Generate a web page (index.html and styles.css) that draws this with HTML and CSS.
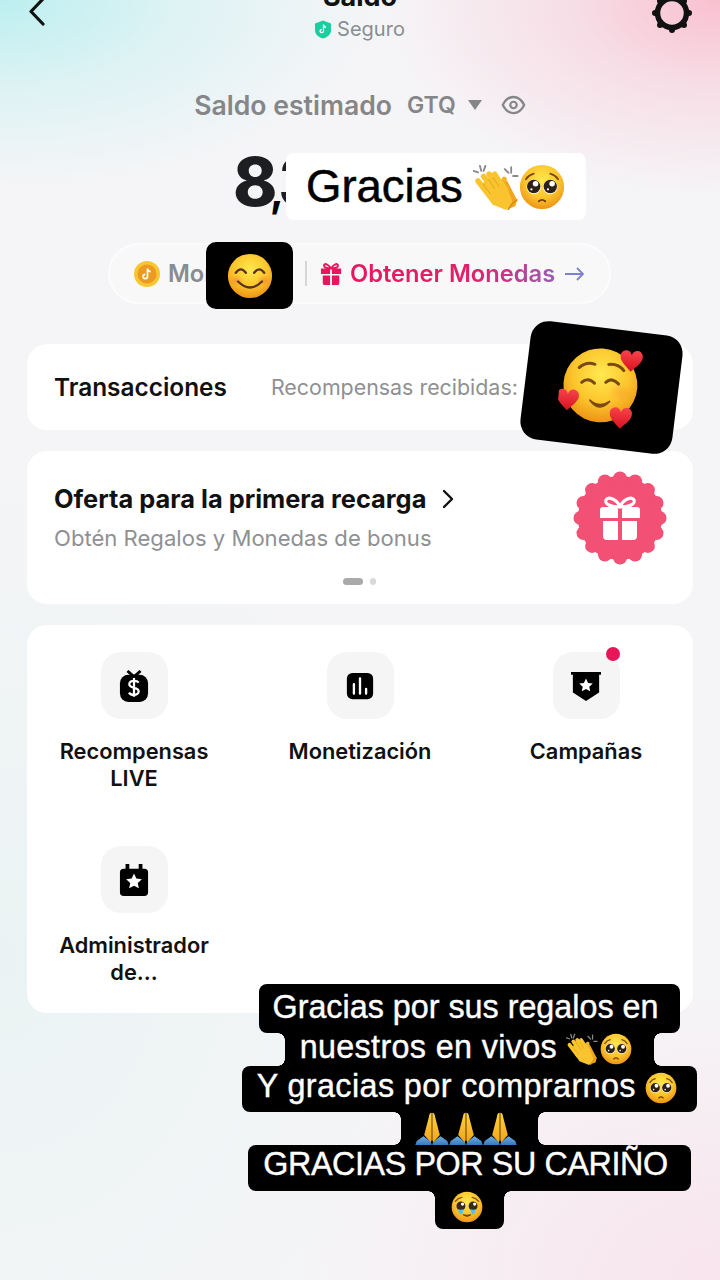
FILE: index.html
```html
<!DOCTYPE html>
<html lang="es">
<head>
<meta charset="utf-8">
<title>Saldo</title>
<link rel="stylesheet" href="styles.css">
</head>
<body>
<svg class="sprite" aria-hidden="true">
  <defs>
    <radialGradient id="face" cx="50%" cy="35%" r="70%">
      <stop offset="0" stop-color="#ffe94f"/>
      <stop offset=".55" stop-color="#fcc52c"/>
      <stop offset="1" stop-color="#ea8a12"/>
    </radialGradient>
    <radialGradient id="blush" cx="50%" cy="50%" r="50%">
      <stop offset="0" stop-color="#f4683a" stop-opacity=".45"/>
      <stop offset="1" stop-color="#f4683a" stop-opacity="0"/>
    </radialGradient>
    <linearGradient id="heart" x1="0" y1="0" x2="0" y2="1">
      <stop offset="0" stop-color="#f9424c"/>
      <stop offset="1" stop-color="#d5121f"/>
    </linearGradient>
    <linearGradient id="hand" x1="0" y1="0" x2="0" y2="1">
      <stop offset="0" stop-color="#ffd23f"/>
      <stop offset="1" stop-color="#f2a51c"/>
    </linearGradient>
    <linearGradient id="sleeve" x1="0" y1="0" x2="0" y2="1">
      <stop offset="0" stop-color="#6fb0e8"/>
      <stop offset="1" stop-color="#2f72b5"/>
    </linearGradient>
    <symbol id="e-plead" viewBox="0 0 100 100">
      <circle cx="50" cy="50" r="48" fill="url(#face)"/>
      <path d="M15 33q6-9 17-12M85 33q-6-9-17-12" fill="none" stroke="#7a4a12" stroke-width="4" stroke-linecap="round"/>
      <circle cx="32" cy="50" r="15.500" fill="#fff"/><circle cx="68" cy="50" r="15.500" fill="#fff"/>
      <circle cx="32" cy="49" r="14.500" fill="#2c2018"/><circle cx="68" cy="49" r="14.500" fill="#2c2018"/>
      <circle cx="36" cy="43" r="6" fill="#fff"/><circle cx="72" cy="43" r="6" fill="#fff"/>
      <circle cx="27" cy="55" r="2.500" fill="#fff"/><circle cx="63" cy="55" r="2.500" fill="#fff"/>
      <path d="M43 81q7-6 14 0" fill="none" stroke="#6d3c10" stroke-width="4" stroke-linecap="round"/>
    </symbol>
    <symbol id="e-tear" viewBox="0 0 100 100">
      <circle cx="50" cy="50" r="48" fill="url(#face)"/>
      <path d="M14 32q8-10 20-12M86 32q-8-10-20-12" fill="none" stroke="#8a5514" stroke-width="4" stroke-linecap="round"/>
      <circle cx="31" cy="47" r="14" fill="#3a2a1e"/><circle cx="69" cy="47" r="14" fill="#3a2a1e"/>
      <circle cx="36" cy="41" r="5" fill="#fff"/><circle cx="74" cy="41" r="5" fill="#fff"/>
      <path d="M22 56q9 5 18 0l-4 14q-5 6-10 0zM60 56q9 5 18 0l-4 14q-5 6-10 0z" fill="#52c3e8"/>
      <path d="M38 74q12 10 24 0q-12 4-24 0z" fill="#6d3c10" stroke="#6d3c10" stroke-width="3" stroke-linejoin="round"/>
    </symbol>
    <symbol id="e-smile" viewBox="0 0 100 100">
      <circle cx="50" cy="50" r="48" fill="url(#face)"/>
      <ellipse cx="20" cy="60" rx="16" ry="12" fill="url(#blush)"/><ellipse cx="80" cy="60" rx="16" ry="12" fill="url(#blush)"/>
      <path d="M19 43q11-15 22 0M59 43q11-15 22 0" fill="none" stroke="#59341a" stroke-width="5" stroke-linecap="round"/>
      <path d="M24 62q26 26 52 0" fill="none" stroke="#59341a" stroke-width="5" stroke-linecap="round"/>
    </symbol>
    <symbol id="e-hearts" viewBox="0 0 100 100">
      <circle cx="48" cy="47" r="43" fill="url(#face)"/>
      <ellipse cx="72" cy="54" rx="14" ry="11" fill="url(#blush)" opacity=".5"/>
      <path d="M22 28q8-8 18-5M56 22q11-2 18 6" fill="none" stroke="#7b4a12" stroke-width="3.500" stroke-linecap="round"/>
      <path d="M26 45q7-7 15 0M54 43q7-7 15 1" fill="none" stroke="#7b4a12" stroke-width="3.500" stroke-linecap="round"/>
      <path d="M37 65q12 9 23 0q-11 14-23 0z" fill="#7b4a12" stroke="#7b4a12" stroke-width="2" stroke-linejoin="round"/>
      <use href="#e-heart" x="68" y="3" width="28" height="28"/>
      <use href="#e-heart" x="-3" y="53" width="28" height="28"/>
      <use href="#e-heart" x="60" y="70" width="28" height="28"/>
    </symbol>
    <symbol id="e-heart" viewBox="0 0 24 24">
      <path d="M12 22C6 16 1 12 1 7.500A5.500 5.500 0 0 1 12 5.500 5.500 5.500 0 0 1 23 7.500C23 12 18 16 12 22z" fill="url(#heart)"/>
    </symbol>
    <symbol id="e-clap" viewBox="0 0 100 100">
      <path d="M1 15l10 3M15 4l3 11M27 4l-4 11M69 11l8 8M83 7v12M97 26H87" fill="none" stroke="#8a8a8a" stroke-width="4" stroke-linecap="round"/>
      <path d="M68 33L62 58" fill="none" stroke="#f4b426" stroke-width="11" stroke-linecap="round"/>
      <path d="M60 50l14-14 22 42-4 14-16 6z" fill="#f0a71f"/>
      <path d="M14 45l38-24 22 28 12 34-14 17-30-12z" fill="#f9c42f"/>
      <g fill="none" stroke="#f9c42f" stroke-width="12" stroke-linecap="round">
        <path d="M11 37l26 34M23 27l24 32M35 22l21 30M47 22l18 30"/>
      </g>
      <path d="M22 44l16 21M33 33l14 20M44 30l12 18" fill="none" stroke="#e39c18" stroke-width="1.800" stroke-linecap="round"/>
      <path d="M76 100l10-15 10-7" fill="none" stroke="#d98c10" stroke-width="3" stroke-linecap="round"/>
    </symbol>
    <symbol id="e-pray" viewBox="0 0 100 100">
      <path d="M0 100l5-15 20-14 22 17 3 12zM100 100l-5-15-20-14-22 17-3 12z" fill="url(#sleeve)"/>
      <path d="M49 2c-5 0-7 4-8 12L27 68l19 21 3-6z" fill="url(#hand)"/>
      <path d="M51 2c5 0 7 4 8 12l14 54-19 21-3-6z" fill="url(#hand)"/>
      <path d="M50 4v78" stroke="#c9780f" stroke-width="1.500"/>
    </symbol>
  </defs>
</svg>

<header class="header">
  <svg class="back" viewBox="0 0 20 30"><path d="M16 2L4 14.500 16 27" fill="none" stroke="#111" stroke-width="3.200" stroke-linecap="round" stroke-linejoin="round"/></svg>
  <div class="title-box">
    <h1 class="title">Saldo</h1>
    <div class="secure">
      <svg class="shield" viewBox="0 0 16 18"><path d="M8 0l8 3v7c0 4-4 7-8 8-4-1-8-4-8-8V3z" fill="#19cfa0"/><path d="M8.500 4v6.500a1.700 1.700 0 1 1-1.700-1.700M8.500 4.500q.6 2 2.600 2.300" fill="none" stroke="#fff" stroke-width="1.300"/></svg>
      <span>Seguro</span>
    </div>
  </div>
  <svg class="gear" viewBox="0 0 40 40">
    <circle cx="20" cy="20" r="14.500" fill="none" stroke="#111" stroke-width="5.500"/>
    <g fill="#111"><circle cx="20" cy="3" r="3"/><circle cx="20" cy="37" r="3"/><circle cx="3" cy="20" r="3"/><circle cx="37" cy="20" r="3"/><circle cx="8" cy="8" r="3"/><circle cx="32" cy="8" r="3"/><circle cx="8" cy="32" r="3"/><circle cx="32" cy="32" r="3"/></g>
  </svg>
</header>

<section class="estimate">
  <span class="estimate-label">Saldo estimado</span>
  <span class="currency">GTQ</span>
  <svg class="caret" viewBox="0 0 14 10"><path d="M0 0h14L7 10z" fill="#858688"/></svg>
  <svg class="eye" viewBox="0 0 28 22"><path d="M2 11C5 5 9 2 14 2s9 3 12 9c-3 6-7 9-12 9S5 17 2 11z" fill="none" stroke="#858688" stroke-width="2.600" stroke-linejoin="round"/><circle cx="14" cy="11" r="3.600" fill="none" stroke="#858688" stroke-width="2.400"/></svg>
</section>

<div class="balance"><span class="balance-num">8<span class="balance-comma">,</span>3</span></div>

<section class="pill">
  <svg class="coin" viewBox="0 0 26 26"><circle cx="13" cy="13" r="13" fill="#f8c631"/><circle cx="13" cy="13" r="9.500" fill="#ec9a22"/><path d="M13.500 7.500v8a2.200 2.200 0 1 1-2.200-2.200M13.500 8q.8 2.400 3.200 2.700" fill="none" stroke="#fff" stroke-width="1.700"/></svg>
  <span class="pill-coins">Monedas</span>
  <span class="pill-div"></span>
  <svg class="pill-gift" viewBox="0 0 24 24"><path d="M1 6h22v6H1zM3 13.500h8V24H5a2 2 0 0 1-2-2zM13 13.500h8V22a2 2 0 0 1-2 2h-6zM11 6v6h2V6z" fill="#e8175d"/><path d="M12 6C9 1 5 0 4.500 2.500S8 6 12 6zM12 6c3-5 7-6 7.500-3.500S16 6 12 6z" fill="none" stroke="#e8175d" stroke-width="2.200"/></svg>
  <span class="pill-cta">Obtener Monedas</span>
  <svg class="pill-arrow" viewBox="0 0 19 14"><path d="M0 7h17.500M12 1l6 6-6 6" fill="none" stroke="#7d7fd0" stroke-width="1.800"/></svg>
</section>

<section class="card card-tx">
  <span class="tx-title">Transacciones</span>
  <span class="tx-sub">Recompensas recibidas:</span>
</section>

<section class="card card-offer">
  <div class="offer-text">
    <div class="offer-title">Oferta para la primera recarga
      <svg class="offer-chevron" viewBox="0 0 12 20"><path d="M2 2l8 8-8 8" fill="none" stroke="#111" stroke-width="2.400" stroke-linecap="round" stroke-linejoin="round"/></svg>
    </div>
    <div class="offer-sub">Obtén Regalos y Monedas de bonus</div>
    <div class="dots"><span class="dot-on"></span><span class="dot-off"></span></div>
  </div>
  <svg class="badge" viewBox="0 0 94 94">
    <g fill="#f25074">
      <circle cx="47" cy="47" r="42"/>
      <circle cx="47" cy="7.500" r="7"/><circle cx="62.100" cy="10.500" r="7"/><circle cx="74.900" cy="19.100" r="7"/><circle cx="83.500" cy="31.900" r="7"/>
      <circle cx="86.500" cy="47" r="7"/><circle cx="83.500" cy="62.100" r="7"/><circle cx="74.900" cy="74.900" r="7"/><circle cx="62.100" cy="83.500" r="7"/>
      <circle cx="47" cy="86.500" r="7"/><circle cx="31.900" cy="83.500" r="7"/><circle cx="19.100" cy="74.900" r="7"/><circle cx="10.500" cy="62.100" r="7"/>
      <circle cx="7.500" cy="47" r="7"/><circle cx="10.500" cy="31.900" r="7"/><circle cx="19.100" cy="19.100" r="7"/><circle cx="31.900" cy="10.500" r="7"/>
    </g>
    <path d="M27 39a3 3 0 0 1 3-3h13l2 2v9H27zM49 38l2-2h13a3 3 0 0 1 3 3v8H49zM30 50h15v19H34a4 4 0 0 1-4-4zM49 50h15v15a4 4 0 0 1-4 4H49z" fill="#fff"/>
    <path d="M47 36c-3-8-12-11-14-7s5 7 14 7zM47 36c3-8 12-11 14-7s-5 7-14 7z" fill="none" stroke="#fff" stroke-width="3.200"/>
  </svg>
</section>

<section class="card card-grid">
  <div class="tool">
    <div class="tile">
      <svg class="tile-icon" viewBox="0 0 32 34"><path d="M9 1l7 6 7-6" fill="none" stroke="#000" stroke-width="3"/><rect x="1" y="5" width="30" height="29" rx="9" fill="#000"/><path d="M21 13.500c-1-1.500-3-2-5-2-3 0-5 1.300-5 3.700 0 5 10 2.500 10 7.500 0 2.300-2.200 3.800-5 3.800-2.400 0-4.300-.8-5.400-2.500M16 8.500v20" fill="none" stroke="#fff" stroke-width="2.400"/></svg>
    </div>
    <div class="tool-label">Recompensas LIVE</div>
  </div>
  <div class="tool">
    <div class="tile">
      <svg class="tile-icon" viewBox="0 0 32 34"><rect x="2" y="3" width="28" height="28" rx="6" fill="#000"/><path d="M9.500 15v10M16 9v16M22.500 20v5" stroke="#fff" stroke-width="2.500" stroke-linecap="round"/></svg>
    </div>
    <div class="tool-label">Monetización</div>
  </div>
  <div class="tool">
    <div class="tile">
      <svg class="tile-icon" viewBox="0 0 32 34"><path d="M0 2h32v3h-2v19L16 33 2 24V5H0z" fill="#000"/><path d="M16 9l2.200 4.700 5 .6-3.700 3.400 1 5L16 20.200l-4.500 2.500 1-5-3.700-3.400 5-.6z" fill="#fff"/></svg>
      <span class="notif"></span>
    </div>
    <div class="tool-label">Campañas</div>
  </div>
  <div class="tool">
    <div class="tile">
      <svg class="tile-icon" viewBox="0 0 32 34"><path d="M7 0h4v5h10V0h4v5h2a4 4 0 0 1 4 4v21a4 4 0 0 1-4 4H5a4 4 0 0 1-4-4V9a4 4 0 0 1 4-4h2z" fill="#000"/><path d="M16 10l2.500 5.400 5.900.7-4.400 4 1.200 5.800-5.200-2.900-5.200 2.900 1.200-5.800-4.400-4 5.900-.7z" fill="#fff"/></svg>
    </div>
    <div class="tool-label">Administrador de...</div>
  </div>
</section>

<div class="sticker sticker-thanks">
  <span>Gracias</span>
  <span class="thanks-emoji">
    <svg class="em em-46"><use href="#e-clap"/></svg><svg class="em em-46"><use href="#e-plead"/></svg>
  </span>
</div>
<div class="sticker sticker-smile"><svg class="em em-46 em-tall"><use href="#e-smile"/></svg></div>
<div class="sticker sticker-hearts"><svg class="em em-86"><use href="#e-hearts"/></svg></div>

<div class="caption">
  <div class="cap cap-1">Gracias por sus regalos en</div>
  <div class="cap cap-narrow cap-2">nuestros en vivos <svg class="em em-32"><use href="#e-clap"/></svg><svg class="em em-32"><use href="#e-plead"/></svg></div>
  <div class="cap cap-3">Y gracias por comprarnos <svg class="em em-32"><use href="#e-plead"/></svg></div>
  <div class="cap cap-narrow cap-4"><svg class="em em-34"><use href="#e-pray"/></svg><svg class="em em-34"><use href="#e-pray"/></svg><svg class="em em-34"><use href="#e-pray"/></svg></div>
  <div class="cap cap-5">GRACIAS POR SU CARIÑO</div>
  <div class="cap cap-narrow cap-6"><svg class="em em-32"><use href="#e-tear"/></svg></div>
</div>
</body>
</html>
```
FILE: styles.css
```css
* { box-sizing: border-box; margin: 0; padding: 0; }

html, body { width: 720px; height: 1280px; overflow: hidden; }

body {
  position: relative;
  font-family: Inter, "Noto Sans", sans-serif;
  color: #111;
  background:
    radial-gradient(ellipse 380px 190px at 0 0, #bdeff0 0, rgba(189,239,240,.38) 50%, rgba(189,239,240,0) 100%),
    radial-gradient(ellipse 340px 200px at 100% 0, #f9c0d0 0, rgba(249,192,208,.42) 45%, rgba(249,192,208,0) 100%),
    radial-gradient(ellipse 420px 300px at 100% 100%, #f8e4ec 0, rgba(248,228,236,0) 100%),
    radial-gradient(ellipse 420px 500px at 0 75%, #eaf3f3 0, rgba(234,243,243,0) 100%),
    #f5f5f7;
}

.sprite { position: absolute; width: 0; height: 0; }

.header {
  display: grid;
  grid-template-columns: 1fr auto 1fr;
  align-items: start;
  margin-top: -22px;
  padding: 0 27px;
  height: 66px;
}
.back { width: 20px; height: 30px; margin-top: 19px; }
.title-box { display: flex; flex-direction: column; align-items: center; }
.title { font-size: 27px; font-weight: 700; line-height: 38px; }
.secure { display: flex; align-items: center; gap: 6px; font-size: 20px; color: #8b8d90; line-height: 26px; }
.shield { width: 16px; height: 19px; }
.gear { width: 40px; height: 40px; margin-top: 15px; justify-self: end; margin-right: 1px; }

.estimate {
  display: flex;
  align-items: center;
  justify-content: center;
  margin-top: 43px;
  height: 36px;
  color: #858688;
  font-weight: 600;
}
.estimate-label { font-size: 26.600px; }
.currency { font-size: 23px; margin-left: 15px; }
.caret { width: 16px; height: 10px; margin-left: 11px; }
.eye { width: 25px; height: 20px; margin-left: 18px; }

.balance {
  display: flex;
  justify-content: center;
  margin-top: 26px;
  height: 66px;
  font-size: 67px;
  line-height: 66px;
  font-weight: 800;
  color: #1d1e21;
}
.balance-num { width: 256px; padding-left: 1px; letter-spacing: -1px; }
.balance-comma { font-size: 46px; font-weight: 600; color: #000; margin: 0 -6px 0 -7px; letter-spacing: 0; }

.pill {
  display: flex;
  align-items: center;
  width: 503px;
  height: 61px;
  margin: 28px 0 0 108px;
  padding: 0 24px;
  border: 2px solid rgba(255,255,255,.5);
  border-radius: 31px;
  background: rgba(255,255,255,.3);
}
.coin { width: 26px; height: 26px; flex: none; }
.pill-coins { font-size: 23.700px; font-weight: 600; color: #8a8b8e; margin-left: 8px; width: 137px; flex: none; overflow: hidden; }
.pill-div { width: 2px; height: 25px; background: #d5d6d8; flex: none; }
.pill-gift { width: 22px; height: 22px; margin-left: 13px; flex: none; }
.pill-cta {
  margin-left: 8px;
  font-size: 23.700px;
  font-weight: 600;
  background: linear-gradient(90deg, #e8175d 0, #e2206a 60%, #9a5bb5 100%);
  -webkit-background-clip: text;
  background-clip: text;
  color: transparent;
  white-space: nowrap;
}
.pill-arrow { width: 19px; height: 14px; margin-left: 10px; flex: none; }

.card {
  margin: 0 27px;
  background: #fff;
  border-radius: 20px;
}

.card-tx {
  display: flex;
  align-items: center;
  height: 86px;
  margin-top: 40px;
  padding-left: 27px;
}
.tx-title { font-size: 24.400px; font-weight: 600; color: #111; }
.tx-sub { margin-left: 44px; font-size: 21.400px; color: #8f9093; white-space: nowrap; }

.card-offer {
  display: flex;
  justify-content: space-between;
  height: 153px;
  margin-top: 21px;
  padding: 0 26px 0 27px;
}
.offer-title { display: flex; align-items: center; margin-top: 32px; font-size: 25.400px; line-height: 32px; font-weight: 700; }
.offer-chevron { width: 12px; height: 20px; margin-left: 16px; }
.offer-sub { margin-top: 8px; font-size: 22.100px; line-height: 30px; color: #8f9093; }
.offer-text { flex: 1; }
.dots { display: flex; align-items: center; gap: 7px; margin: 25px 0 0 289px; }
.dot-on { width: 20px; height: 7px; border-radius: 4px; background: #a9aaac; }
.dot-off { width: 6px; height: 7px; border-radius: 3px; background: #d8d9db; }
.badge { width: 94px; height: 94px; margin-top: 20px; flex: none; }

.card-grid {
  display: grid;
  grid-template-columns: repeat(3, 1fr);
  grid-auto-rows: 194px;
  column-gap: 66px;
  height: 388px;
  margin-top: 21px;
  padding: 27px 27px 0;
}
.tool { display: flex; flex-direction: column; align-items: center; }
.tile {
  position: relative;
  display: flex;
  align-items: center;
  justify-content: center;
  width: 67px;
  height: 67px;
  border-radius: 20px;
  background: #f5f5f5;
}
.tile-icon { width: 30px; height: 32px; }
.notif {
  position: absolute;
  top: -5px;
  right: 0;
  width: 14px;
  height: 14px;
  border-radius: 50%;
  background: #ea1559;
}
.tool-label {
  margin-top: 19px;
  width: 160px;
  text-align: center;
  font-size: 21.800px;
  line-height: 27px;
  font-weight: 600;
  color: #111;
}

.em { display: inline-block; vertical-align: middle; flex: none; }
.em-32 { width: 32px; height: 32px; }
.em-34 { width: 34px; height: 34px; }
.em-46 { width: 46px; height: 46px; }
.em-86 { width: 86px; height: 86px; }
.em-tall { height: 48px; }

.sticker { position: absolute; display: flex; align-items: center; justify-content: center; }
.sticker-thanks {
  left: 286px;
  top: 153px;
  width: 300px;
  height: 67px;
  border-radius: 8px;
  background: #fff;
  color: #000;
  font-family: "Liberation Sans", Arial, sans-serif;
  font-size: 45.500px;
  -webkit-text-stroke: .5px #000;
  gap: 10px;
  justify-content: flex-start;
  padding-left: 20px;
}
.thanks-emoji { display: flex; }
.sticker-smile {
  left: 206px;
  top: 242px;
  width: 87px;
  height: 67px;
  border-radius: 10px;
  background: #000;
}
.sticker-hearts {
  left: 525px;
  top: 328px;
  width: 153px;
  height: 119px;
  border-radius: 18px;
  background: #000;
  transform: rotate(7deg);
}
.sticker-hearts .em { transform: rotate(-3deg); }

.caption {
  position: absolute;
  left: 229.500px;
  top: 984px;
  width: 480px;
  display: flex;
  flex-direction: column;
  align-items: center;
  color: #fff;
  font-family: "Liberation Sans", Arial, sans-serif;
  font-size: 32.300px;
  -webkit-text-stroke: .4px #fff;
  white-space: nowrap;
}
.cap { position: relative; background: #000; border-radius: 8px; padding: 0 14px; text-align: center; }
.cap-narrow { border-radius: 0; }
.cap-narrow::before,
.cap-narrow::after {
  content: "";
  position: absolute;
  top: 0;
  bottom: 0;
  width: 7px;
  background-repeat: no-repeat;
  background-size: 7px 7px;
}
.cap-narrow::before {
  left: -7px;
  background-image:
    radial-gradient(circle at 0 100%, transparent 6.500px, #000 7px),
    radial-gradient(circle at 0 0, transparent 6.500px, #000 7px);
  background-position: 0 0, 0 100%;
}
.cap-narrow::after {
  right: -7px;
  background-image:
    radial-gradient(circle at 100% 100%, transparent 6.500px, #000 7px),
    radial-gradient(circle at 100% 0, transparent 6.500px, #000 7px);
  background-position: 0 0, 0 100%;
}
.cap-1 { height: 49px; line-height: 46px; padding: 0 22px 0 14px; }
.cap-2 { height: 33px; line-height: 26px; padding: 0 22px 0 15px; letter-spacing: .35px; }
.cap-2 .em + .em { margin-left: 2px; }
.cap-3 { height: 46px; line-height: 40px; padding: 0 20px 0 15px; letter-spacing: .42px; }
.cap-4 { height: 33px; line-height: 26px; padding: 0 21px 0 14px; }
.cap-5 { height: 46px; line-height: 38px; padding: 0 23px 0 15px; letter-spacing: -.4px; }
.cap-6 { height: 38px; line-height: 26px; padding: 0 21px 0 16px; border-radius: 0 0 8px 8px; }
.cap-6::before { background-image: radial-gradient(circle at 0 100%, transparent 6.500px, #000 7px); background-position: 0 0; }
.cap-6::after { background-image: radial-gradient(circle at 100% 100%, transparent 6.500px, #000 7px); background-position: 0 0; }
```
